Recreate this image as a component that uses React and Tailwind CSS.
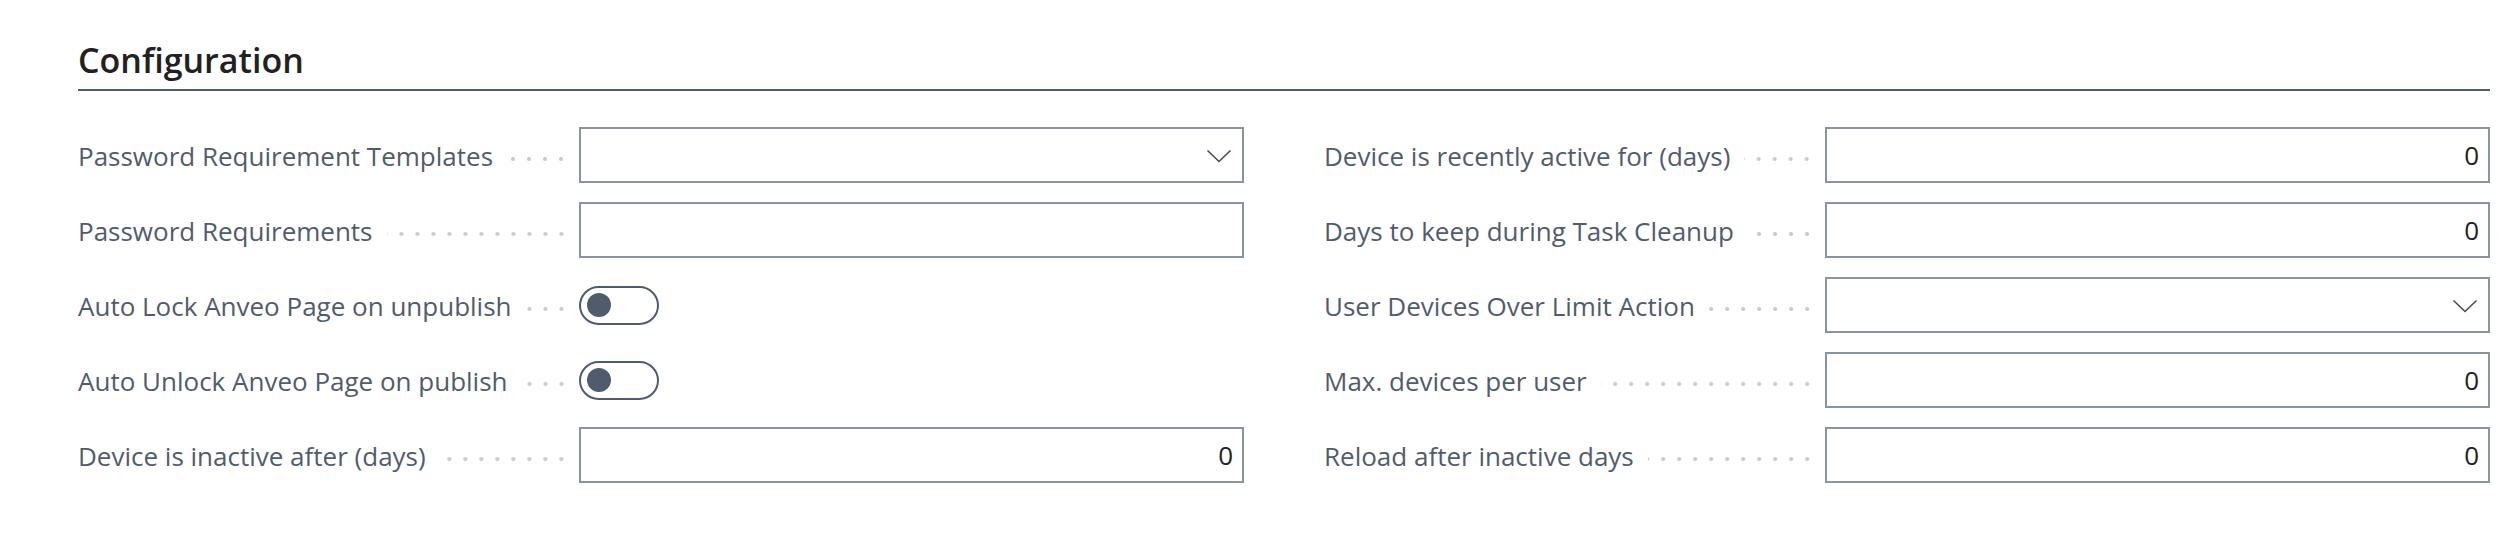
import React from "react";

const leftFields = [
  { label: "Password Requirement Templates", type: "select" },
  { label: "Password Requirements", type: "text" },
  { label: "Auto Lock Anveo Page on unpublish", type: "toggle" },
  { label: "Auto Unlock Anveo Page on publish", type: "toggle" },
  { label: "Device is inactive after (days)", type: "number", value: "0" },
];

const rightFields = [
  { label: "Device is recently active for (days)", type: "number", value: "0" },
  { label: "Days to keep during Task Cleanup", type: "number", value: "0" },
  { label: "User Devices Over Limit Action", type: "select" },
  { label: "Max. devices per user", type: "number", value: "0" },
  { label: "Reload after inactive days", type: "number", value: "0" },
];

const Chevron = () => (
  <svg width="26" height="14" viewBox="0 0 26 14" fill="none">
    <polyline points="1.5,1.5 13,12.5 24.5,1.5" stroke="#4b4b4b" strokeWidth="1.6" />
  </svg>
);

const Control = ({ field }) => {
  if (field.type === "toggle") {
    return (
      <div className="w-[665px] h-[56px] flex items-center">
        <div className="w-[80px] h-[39px] rounded-full border-2 border-[#505c6d] flex items-center">
          <div className="w-[24px] h-[24px] rounded-full bg-[#505c6d] ml-[6px]" />
        </div>
      </div>
    );
  }

  return (
    <div className="w-[665px] h-[56px] border-2 border-[#8a949e] bg-white flex items-center justify-end pr-[9px]">
      {field.type === "select" && (
        <div className="mr-[1px] mt-[1px]">
          <Chevron />
        </div>
      )}
      {field.type === "number" && (
        <span className="text-[26px] text-[#212121] leading-none">{field.value}</span>
      )}
    </div>
  );
};

const FieldRow = ({ field }) => (
  <div className="flex items-center h-[56px]">
    <span className="text-[26px] text-[#505c6d] whitespace-nowrap pt-[3px]">{field.label}</span>
    <div className="flex-1 h-[4px] mt-[7px] ml-[14px] mr-[10px] bg-[radial-gradient(circle,#cbcbd3_1.7px,transparent_2.3px)] bg-[length:16px_4px] bg-repeat-x bg-[position:right_center]" />
    <Control field={field} />
  </div>
);

const App = () => {
  return (
    <div
      className="min-h-[536px] bg-white pt-[37px] pl-[78px] pr-[13px]"
      style={{ fontFamily: '"Open Sans", "Noto Sans", sans-serif' }}
    >
      <h2 className="text-[34px] leading-[46px] font-semibold text-[#212121]">Configuration</h2>
      <div className="mt-[6px] h-[2px] bg-[#505c6d]" />

      <div className="mt-[36px] grid grid-cols-2 gap-x-[80px]">
        <div className="flex flex-col gap-[19px]">
          {leftFields.map((f) => (
            <FieldRow key={f.label} field={f} />
          ))}
        </div>
        <div className="flex flex-col gap-[19px]">
          {rightFields.map((f) => (
            <FieldRow key={f.label} field={f} />
          ))}
        </div>
      </div>
    </div>
  );
};

export default App;
